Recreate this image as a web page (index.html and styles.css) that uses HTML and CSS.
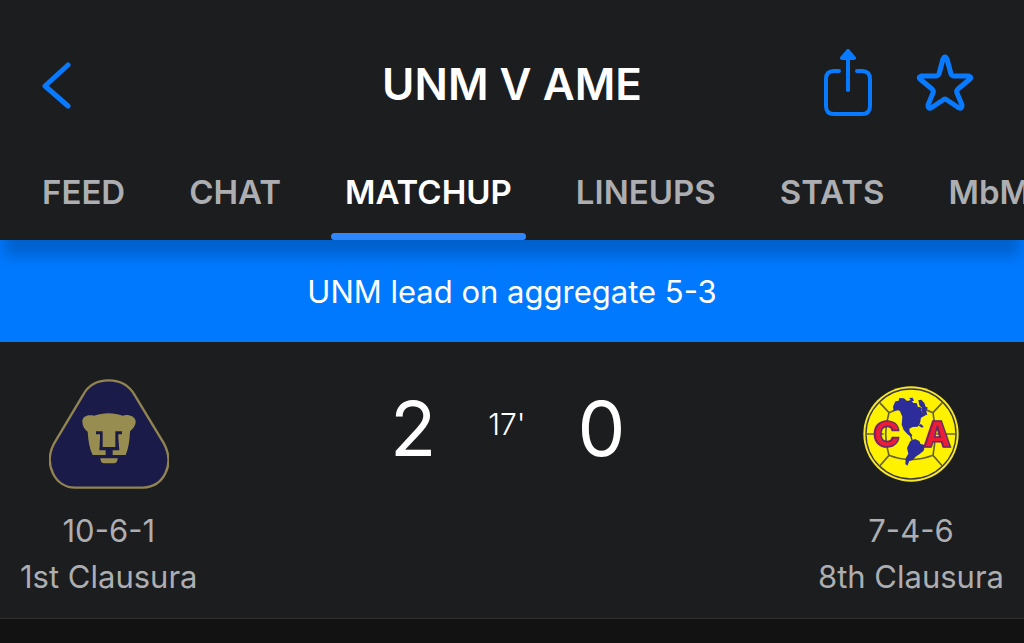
FILE: index.html
```
<!DOCTYPE html>
<html lang="en">
<head>
  <meta charset="UTF-8">
  <meta name="viewport" content="width=device-width, initial-scale=1">
  <title>UNM V AME</title>
  <link rel="stylesheet" href="styles.css">
</head>
<body>

<header class="header">
  <div class="topbar">
    <button class="icon-btn" type="button" aria-label="Back">
      <svg width="34" height="50" viewBox="0 0 34 50">
        <path d="M28 6 L5 27 L28 47" />
      </svg>
    </button>
    <h1 class="title">UNM V AME</h1>
    <div class="actions">
      <button class="icon-btn" type="button" aria-label="Share">
        <svg class="thin" width="52" height="70" viewBox="0 0 52 70">
          <path d="M17 22 H12 Q4 22 4 30 V57 Q4 65 12 65 H40 Q48 65 48 57 V30 Q48 22 40 22 H35 M26 9 V41" />
          <path class="solid" d="M26 2 L32 9 H20 Z" />
        </svg>
      </button>
      <button class="icon-btn" type="button" aria-label="Favorite">
        <svg width="60" height="60" viewBox="0 0 60 60">
          <path d="M29 5 Q31 1 33 5 L37 20 Q38 22 40 22 L55 22 Q58 23 56 25 L44 35 Q42 37 43 39 L48 51 Q48 55 45 54 L33 46 Q31 44 29 46 L17 54 Q14 55 14 51 L19 39 Q20 37 18 35 L6 25 Q4 23 7 22 L22 22 Q24 22 25 20 Z" />
        </svg>
      </button>
    </div>
  </div>

  <nav class="tabs">
    <a class="tab" href="#feed">FEED</a>
    <a class="tab" href="#chat">CHAT</a>
    <a class="tab active" href="#matchup">MATCHUP</a>
    <a class="tab" href="#lineups">LINEUPS</a>
    <a class="tab" href="#stats">STATS</a>
    <a class="tab" href="#mbm">MbM</a>
  </nav>
</header>

<p class="banner">UNM lead on aggregate 5-3</p>

<main class="match">
  <section class="team">
    <div class="crest">
      <svg width="120" height="112" viewBox="27 24 360 334" role="img" aria-label="UNM">
        <path fill="#1b1b49" stroke="#918452" stroke-width="7" d="M128 76 C142 48 166 30 206 30 C246 30 270 48 285 76 L372 220 C404 280 374 349 309 352 H105 C44 351 10 281 42 220 Z" />
        <path fill="#988d50" d="M127 151 C129 136 147 132 162 136 C188 126 224 126 248 136 C264 131 285 137 287 153 C287 168 277 177 270 183 C269 212 265 236 257 254 H158 C148 234 145 211 143 184 C135 177 127 169 127 151 Z" />
        <!-- eyes, nose and mouth -->
        <path fill="#1b1b49" d="M168 183 H188 V230 H226 V183 H246 V192 H235 V204 L238 240 H218 V256 H197 V240 H178 L180 204 V192 H168 Z" />
        <path fill="#988d50" d="M181 264 H233 Q233 279 221 279 H193 Q181 279 181 264 Z" />
      </svg>
    </div>
    <p>10-6-1</p>
    <p>1st Clausura</p>
  </section>

  <section class="score">
    <span class="goals">2</span>
    <span class="clock">17'</span>
    <span class="goals">0</span>
  </section>

  <section class="team">
    <div class="crest">
      <svg width="96" height="96" viewBox="42 32 288 288" role="img" aria-label="AME">
        <circle cx="186" cy="176" r="143" fill="#f6e72b" />
        <circle cx="186" cy="176" r="135" fill="#fff200" stroke="#3b3a46" stroke-width="4" />
        <!-- ball seams -->
        <g fill="none" stroke="#68632f" stroke-width="5">
          <path d="M120 112 Q185 82 252 112 Q264 176 252 240 Q185 266 120 240 Q100 176 120 112 Z" />
          <path d="M120 112 L92 82 M252 112 L280 82 M120 240 L92 272 M252 240 L280 272 M50 176 H104 M262 176 H322" />
        </g>
        <!-- continents -->
        <g fill="#2c2d9b">
          <path d="M132 94 L139 78 L149 76 L151 68 L165 69 L174 77 L186 74 L193 83 L203 83 L207 96 L214 94 L219 111 L230 120 L216 127 L213 144 L206 154 L191 155 L181 160 L182 170 L190 180 L186 184 L175 176 L164 164 L158 148 L160 124 L153 108 L145 103 L134 108 Z" />
          <path d="M181 68 L191 67 L195 76 L187 78 Z M208 75 L217 73 L226 83 L230 94 L237 97 L231 105 L235 118 L227 119 L218 109 L220 99 L211 90 Z M207 150 L219 157 L224 154 L216 146 Z" />
          <path d="M184 197 L198 191 L211 197 L214 205 L228 210 L224 226 L213 235 L200 244 L192 253 L181 257 L175 271 L169 266 L170 249 L178 235 L174 218 Z" />
        </g>
        <path d="M184 178 L190 197" stroke="#2c2d9b" stroke-width="4" />
        <text class="letter" x="112" y="216">C</text>
        <text class="letter" x="264" y="216">A</text>
      </svg>
    </div>
    <p>7-4-6</p>
    <p>8th Clausura</p>
  </section>
</main>

</body>
</html>
```
FILE: styles.css
```
* {
  box-sizing: border-box;
}

body {
  margin: 0;
  background-color: #121212;
  color: #fff;
  font-family: Inter, "Liberation Sans", sans-serif;
  overflow-x: hidden;
}

h1, p {
  margin: 0;
}

/* Header */
.header {
  position: relative;
  background-color: #1c1d1f;
  box-shadow: 0 20px 14px -4px rgba(0, 0, 0, 0.2);
}

.topbar {
  display: grid;
  grid-template-columns: 1fr auto 1fr;
  align-items: center;
  height: 168px;
  padding: 0 40px;
}

.title {
  font-size: 44px;
  line-height: 56px;
  font-weight: 600;
}

.actions {
  display: flex;
  justify-content: flex-end;
  align-items: center;
  gap: 40px;
  padding-right: 10px;
}

.icon-btn {
  justify-self: start;
  display: flex;
  padding: 0;
  border: 0;
  background: none;
}

.icon-btn svg {
  fill: none;
  stroke: #087aff;
  stroke-width: 5;
  stroke-linecap: round;
  stroke-linejoin: round;
}

.icon-btn .thin {
  stroke-width: 4;
}

.icon-btn .solid {
  fill: #087aff;
}

/* Tabs */
.tabs {
  display: flex;
  gap: 36px;
  height: 72px;
  padding-left: 28px;
  overflow: hidden;
}

.tab {
  flex: none;
  display: flex;
  flex-direction: column;
  justify-content: space-between;
  padding: 4px 14px 0;
  color: #adaeb1;
  font-size: 33px;
  line-height: 40px;
  font-weight: 600;
  text-decoration: none;
}

.tab.active {
  color: #fff;
}

.tab.active::after {
  content: "";
  height: 7px;
  margin: 0 -14px;
  border-radius: 4px;
  background-color: #2f86fb;
}

/* Aggregate banner */
.banner {
  padding: 34px 16px 32px;
  background-color: #0079ff;
  font-size: 31px;
  line-height: 36px;
  text-align: center;
}

/* Match */
.match {
  display: flex;
  justify-content: space-between;
  padding: 34px 20px 18px;
  background-color: #1c1d1f;
  border-bottom: 1px solid #303030;
}

.team {
  color: #adaeb1;
  font-size: 31px;
  line-height: 46px;
  text-align: center;
}

.crest {
  display: flex;
  justify-content: center;
  align-items: center;
  height: 116px;
  margin-bottom: 16px;
}

.score {
  display: flex;
  align-items: center;
  gap: 52px;
  height: 104px;
}

.goals {
  font-size: 76px;
}

.clock {
  padding-bottom: 8px;
  font-size: 30px;
  font-weight: 300;
}

.letter {
  fill: #ed1c35;
  stroke: #6b286e;
  stroke-width: 5;
  font-family: Inter, sans-serif;
  font-size: 108px;
  font-weight: 800;
  text-anchor: middle;
}
```
